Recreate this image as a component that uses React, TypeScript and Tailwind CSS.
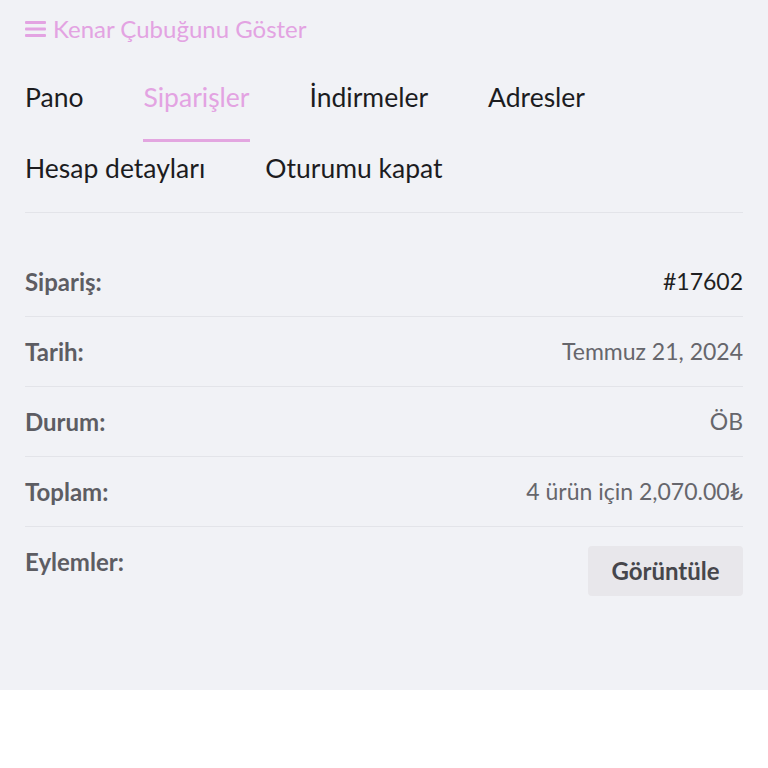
import React from "react";

const font = { fontFamily: "Lato, 'Noto Sans', sans-serif" };

function Row({ label, value, valueClass, first }: { label: string; value: React.ReactNode; valueClass?: string; first?: boolean }) {
  return (
    <div className={`flex items-center justify-between h-[70px] border-b border-[#e3e4e9] ${first ? "mt-[34px]" : ""}`}>
      <span className="text-[24px] font-bold text-[#5d5d63]">{label}</span>
      <span className={`text-[23px] ${valueClass ?? "text-[#66666c]"}`}>{value}</span>
    </div>
  );
}

export default function App() {
  return (
    <div className="w-[768px] h-[768px] bg-white" style={font}>
      <div className="bg-[#f1f2f6] h-[690px] px-[25px] pt-[14px]">
        <div className="flex items-center gap-[7px] h-[30px] text-[24px] leading-[30px] text-[#e3a3e2]">
          <svg width="21" height="18" viewBox="0 0 21 18" className="shrink-0">
            <rect x="0" y="1" width="21" height="3" rx="1" fill="#e3a3e2" />
            <rect x="0" y="7.5" width="21" height="3" rx="1" fill="#e3a3e2" />
            <rect x="0" y="14" width="21" height="3" rx="1" fill="#e3a3e2" />
          </svg>
          <span>Kenar Çubuğunu Göster</span>
        </div>
        <nav className="mt-[35px] flex flex-wrap gap-x-[60px] gap-y-[8px] border-b border-[#e3e4e9] text-[26.5px] leading-[36px] text-[#1c1c1f]">
          <span className="pb-[24px] border-b-[3px] border-transparent">Pano</span>
          <span className="pb-[24px] border-b-[3px] border-[#e3a6e0] text-[#e3a3e2]">Siparişler</span>
          <span className="pb-[24px] border-b-[3px] border-transparent">İndirmeler</span>
          <span className="pb-[24px] border-b-[3px] border-transparent">Adresler</span>
          <span className="pb-[23px] border-b-[3px] border-transparent">Hesap detayları</span>
          <span className="pb-[23px] border-b-[3px] border-transparent">Oturumu kapat</span>
        </nav>
        <div>
          <Row first label="Sipariş:" value="#17602" valueClass="text-[#1f1f22]" />
          <Row label="Tarih:" value="Temmuz 21, 2024" />
          <Row label="Durum:" value="ÖB" />
          <Row label="Toplam:" value="4 ürün için 2,070.00₺" />
          <div className="flex items-start justify-between pt-[19px]">
            <span className="mt-[3px] text-[24px] leading-[26px] font-bold text-[#5d5d63]">Eylemler:</span>
            <button className="w-[155px] h-[50px] rounded-[4px] bg-[#e8e7eb] text-[24px] font-bold text-[#46464b]">Görüntüle</button>
          </div>
        </div>
      </div>
    </div>
  );
}
